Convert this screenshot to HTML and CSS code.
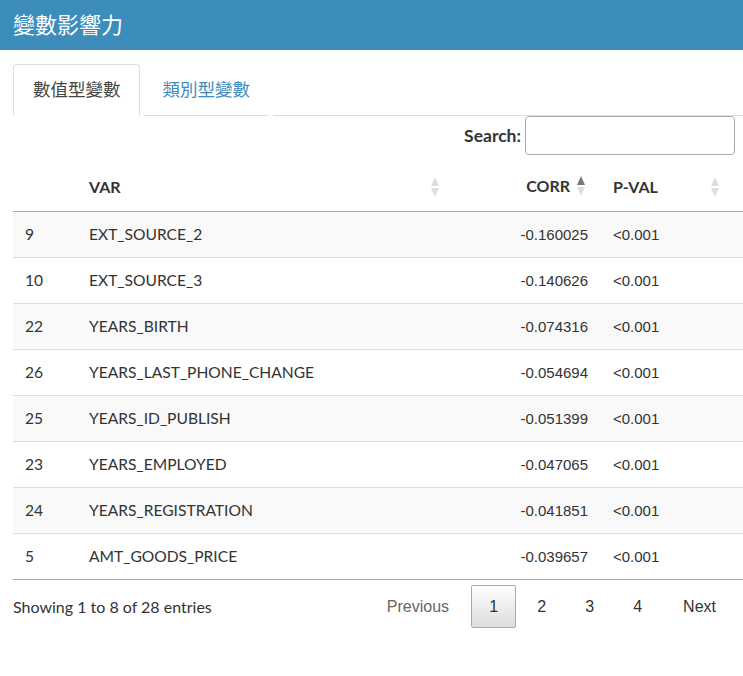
FILE: index.html
```html
<!DOCTYPE html>
<html lang="zh-Hant">
<head>
<meta charset="utf-8">
<title>變數影響力</title>
<link rel="stylesheet" href="styles.css">
</head>
<body>
<header class="topbar">變數影響力</header>
<main class="content">
  <nav class="tabs">
    <a class="tab active">數值型變數</a>
    <a class="tab">類別型變數</a>
    <div class="tab-rest"></div>
  </nav>
  <div class="filter">
    <label class="search-label">Search:</label>
    <input class="search-input" type="search">
  </div>
  <table class="dt">
    <colgroup>
      <col class="c-idx"><col class="c-var"><col class="c-corr"><col class="c-pval">
    </colgroup>
    <thead>
      <tr>
        <th class="h-idx"></th>
        <th class="h-var"><span>VAR</span><span class="sort"><i class="up"></i><i class="dn"></i></span></th>
        <th class="h-corr"><span>CORR</span><span class="sort asc"><i class="up"></i><i class="dn"></i></span></th>
        <th class="h-pval"><span>P-VAL</span><span class="sort"><i class="up"></i><i class="dn"></i></span></th>
      </tr>
    </thead>
    <tbody>
      <tr><td>9</td><td>EXT_SOURCE_2</td><td class="num">-0.160025</td><td class="pv">&lt;0.001</td></tr>
      <tr><td>10</td><td>EXT_SOURCE_3</td><td class="num">-0.140626</td><td class="pv">&lt;0.001</td></tr>
      <tr><td>22</td><td>YEARS_BIRTH</td><td class="num">-0.074316</td><td class="pv">&lt;0.001</td></tr>
      <tr><td>26</td><td>YEARS_LAST_PHONE_CHANGE</td><td class="num">-0.054694</td><td class="pv">&lt;0.001</td></tr>
      <tr><td>25</td><td>YEARS_ID_PUBLISH</td><td class="num">-0.051399</td><td class="pv">&lt;0.001</td></tr>
      <tr><td>23</td><td>YEARS_EMPLOYED</td><td class="num">-0.047065</td><td class="pv">&lt;0.001</td></tr>
      <tr><td>24</td><td>YEARS_REGISTRATION</td><td class="num">-0.041851</td><td class="pv">&lt;0.001</td></tr>
      <tr><td>5</td><td>AMT_GOODS_PRICE</td><td class="num">-0.039657</td><td class="pv">&lt;0.001</td></tr>
    </tbody>
  </table>
  <div class="footer">
    <div class="info">Showing 1 to 8 of 28 entries</div>
    <div class="pager">
      <span class="pbtn prev">Previous</span>
      <span class="pbtn page current">1</span>
      <span class="pbtn page">2</span>
      <span class="pbtn page">3</span>
      <span class="pbtn page">4</span>
      <span class="pbtn next">Next</span>
    </div>
  </div>
</main>
</body>
</html>
```
FILE: styles.css
```css
* { box-sizing: border-box; }
html, body { margin: 0; padding: 0; background: #fff; }
body {
  font-family: "Lato", "Noto Sans CJK TC", sans-serif;
  color: #333;
  font-size: 15.6px;
  overflow: hidden;
}
.topbar {
  height: 50px;
  background: #3c8dbc;
  color: #fff;
  font-family: "Noto Sans CJK TC", sans-serif;
  font-size: 22px;
  line-height: 46px;
  padding-left: 13px;
}
.content {
  padding: 14px 0 0 13px;
}
.tabs {
  display: flex;
  height: 52px;
  align-items: stretch;
}
.tab {
  font-family: "Noto Sans CJK TC", sans-serif;
  font-size: 17.5px;
  line-height: 48px;
  padding: 0 18px 0 19px;
  color: #3c8dbc;
  border: 1px solid transparent;
  border-bottom: 1px solid #ddd;
  border-radius: 4px 4px 0 0;
  margin-right: 4px;
}
.tab.active {
  color: #444;
  border-color: #ddd;
  border-bottom-color: transparent;
  margin-right: 3px;
}
.tab-rest {
  flex: 1;
  border-bottom: 1px solid #ddd;
}
.filter {
  display: flex;
  justify-content: flex-end;
  align-items: center;
  padding: 0 8px 0 0;
  height: 40px;
  margin-top: -1px;
}
.search-label {
  font-weight: bold;
  font-size: 17.5px;
  margin-right: 4px;
}
.search-input {
  width: 210px;
  height: 39px;
  border: 1px solid #aaa;
  border-radius: 4px;
  margin: 0;
}
.dt {
  width: 730px;
  border-collapse: collapse;
  margin-top: 5px;
  table-layout: fixed;
}
.c-idx { width: 64px; }
.c-var { width: 371px; }
.c-corr { width: 153px; }
.c-pval { width: 142px; }
.dt th {
  font-weight: bold;
  text-align: left;
  height: 51px;
  padding: 0 12px;
  border-bottom: 1px solid #aaa;
  font-size: 16px;
}
.dt th > span:first-child { vertical-align: middle; }
.h-var, .h-pval { position: relative; }
.h-var .sort { position: absolute; right: 8px; top: 17px; }
.h-pval .sort { position: absolute; right: 23px; top: 17px; }
.h-corr { text-align: right !important; padding-right: 15px !important; }
.h-corr .sort { display: inline-flex; vertical-align: middle; margin-left: 7px; }
.sort {
  display: inline-flex;
  flex-direction: column;
  gap: 2px;
  width: 9px;
}
.sort i {
  display: block;
  width: 0;
  height: 0;
  border-left: 4.5px solid transparent;
  border-right: 4.5px solid transparent;
}
.sort .up { border-bottom: 9px solid #ddd; }
.sort .dn { border-top: 9px solid #ddd; }
.sort.asc .up { border-bottom-color: #777; }
.dt td {
  height: 46px;
  padding: 0 12px;
  border-top: 1px solid #ddd;
  font-size: 15.6px;
}
.dt tbody tr:first-child td { border-top: none; }
.dt tbody tr:nth-child(odd) { background: #f9f9f9; }
.dt tbody tr:last-child td { border-bottom: 1px solid #aaa; }
.dt td.num, .dt td.pv {
  font-family: "Liberation Sans", Arial, sans-serif;
  font-size: 15px;
}
.dt td.num { text-align: right; padding-right: 13px; }
.footer {
  display: flex;
  justify-content: space-between;
  align-items: center;
  padding: 5px 12px 0 0;
}
.info { font-size: 16px; }
.pager {
  display: flex;
  gap: 3px;
  align-items: center;
}
.pbtn {
  height: 43px;
  line-height: 41px;
  font-family: "Liberation Sans", Arial, sans-serif;
  font-size: 16px;
  border: 1px solid transparent;
  border-radius: 2px;
  text-align: center;
  color: #333;
}
.pbtn.page { width: 45px; }
.pbtn.prev { padding: 0 18px 0 16px; color: #666; }
.pbtn.next { padding: 0 14px 0 19px; }
.pbtn.current {
  border-color: #aaa;
  background: linear-gradient(to bottom, #fff 0%, #dcdcdc 100%);
}
```
